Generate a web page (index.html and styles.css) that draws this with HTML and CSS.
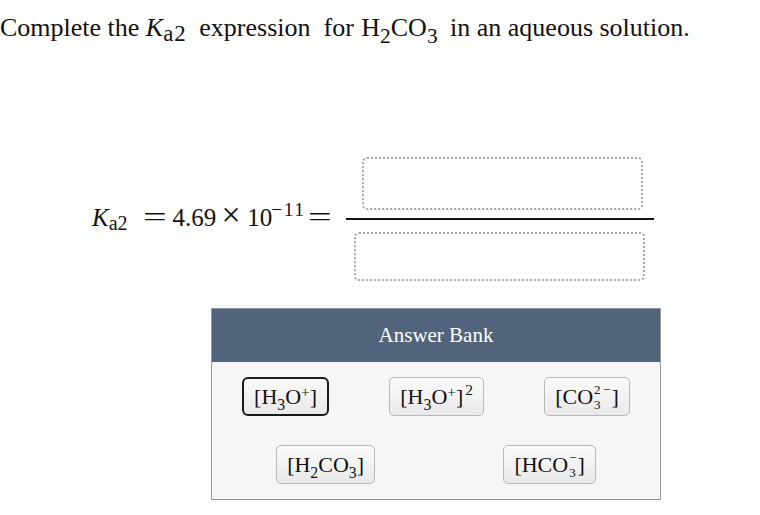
FILE: index.html
```html
<!DOCTYPE html>
<html lang="en">
<head>
<meta charset="utf-8">
<title>Ka2 expression</title>
<link rel="stylesheet" href="styles.css">
</head>
<body>
<p class="prompt">Complete the <span class="math math-k"><i class="k">K</i><sub class="ka">a2</sub></span> expression&nbsp; for <span class="math math-acid">H<sub>2</sub>CO<sub>3</sub></span> in an aqueous solution.</p>

<div class="equation">
  <div class="lhs">
    <i class="k">K</i><sub class="ka">a2</sub><span class="op op-first">=</span><span class="num">4.69</span><span class="times">×</span><span class="num">10</span><sup class="exp">−11</sup><span class="op op-last">=</span>
  </div>
  <div class="fraction">
    <div class="slot slot-num"></div>
    <div class="bar"></div>
    <div class="slot slot-den"></div>
  </div>
</div>

<section class="bank">
  <header class="bank-head">Answer Bank</header>
  <div class="bank-body">
    <div class="bank-row">
      <button class="chip chip-active">[H<sub>3</sub>O<sup>+</sup>]</button>
      <button class="chip">[H<sub>3</sub>O<sup>+</sup>]<sup class="pow">2</sup></button>
      <button class="chip">[CO<span class="stack"><span class="up">2&#8201;−</span><span class="down">3</span></span>]</button>
    </div>
    <div class="bank-row">
      <button class="chip">[H<sub>2</sub>CO<sub>3</sub>]</button>
      <button class="chip">[HCO<span class="stack"><span class="up">−</span><span class="down">3</span></span>]</button>
    </div>
  </div>
</section>
</body>
</html>
```
FILE: styles.css
```css
html, body {
  margin: 0;
  padding: 0;
  background: #fff;
}

body {
  width: 760px;
  height: 515px;
  overflow: hidden;
  font-family: "Liberation Serif", "Times New Roman", serif;
  color: #111;
}

sub, sup {
  line-height: 0;
}

.prompt {
  margin: 0;
  padding-top: 14px;
  font-size: 26px;
  line-height: 28px;
  white-space: nowrap;
}

.prompt sub {
  font-size: 0.82em;
  vertical-align: -0.32em;
}

.k {
  font-style: italic;
}

.prompt .ka {
  font-size: 0.88em;
  letter-spacing: 1px;
  vertical-align: -0.22em;
}

.math-k {
  margin-right: 6px;
}

.math-acid {
  margin: 0 6px 0 1px;
}

/* equation: left side, then a fraction of two drop slots */
.equation {
  display: flex;
  align-items: center;
  margin-top: 115px;
  padding-left: 92px;
}

.lhs {
  font-family: "Liberation Serif", "Times New Roman", serif;
  font-size: 25px;
  line-height: 28px;
  white-space: nowrap;
  margin-bottom: 3px;
}

.lhs .ka {
  font-size: 0.8em;
  vertical-align: -0.2em;
}

.lhs .op {
  display: inline-block;
  font-size: 28px;
  line-height: 0;
  transform: scaleX(1.5);
}

.lhs .op-first {
  margin: 0 10px 0 19px;
}

.lhs .op-last {
  margin: 0 19px 0 6px;
}

.lhs .times {
  display: inline-block;
  line-height: 0;
  transform: scale(1.35);
  vertical-align: 3px;
  margin: 0 9px 0 8px;
}

.lhs .exp {
  font-size: 0.78em;
  letter-spacing: 1.5px;
  vertical-align: 0.5em;
  margin-left: -1px;
}

.fraction {
  display: flex;
  flex-direction: column;
  width: 308px;
}

.slot {
  box-sizing: border-box;
  border: 2px dotted #a6a6a6;
  border-radius: 5px;
}

.slot-num {
  width: 281px;
  height: 53px;
  margin-left: 16px;
}

.bar {
  height: 2px;
  background: #111;
  margin: 8px 0 12px;
}

.slot-den {
  width: 291px;
  height: 49px;
  margin-left: 8px;
}

/* answer bank */
.bank {
  width: 450px;
  box-sizing: border-box;
  margin: 27px 0 0 211px;
  border: 1px solid #999;
}

.bank-head {
  height: 53px;
  background: #52647c;
  color: #fff;
  font-size: 21px;
  line-height: 53px;
  text-align: center;
}

.bank-body {
  background: #f6f6f6;
  padding: 15px 0 15px;
  display: flex;
  flex-direction: column;
  gap: 29px;
}

.bank-row {
  display: flex;
  justify-content: space-around;
}

.chip {
  box-sizing: border-box;
  height: 39px;
  padding: 0 10px;
  font-family: "Liberation Serif", "Times New Roman", serif;
  font-size: 22px;
  color: #111;
  background: linear-gradient(#fbfbfb, #e9e9e9);
  border: 1px solid #b9b9b9;
  border-radius: 5px;
  white-space: nowrap;
}

.chip-active {
  border: 2px solid #1a1a1a;
  border-radius: 6px;
}

.chip sub {
  font-size: 0.72em;
  vertical-align: -0.35em;
}

.chip sup {
  font-size: 0.7em;
  vertical-align: 0.45em;
}

.chip .pow {
  margin-left: 2px;
  vertical-align: 0.55em;
}

/* charge stacked over the subscript */
.stack {
  display: inline-flex;
  flex-direction: column;
  align-items: flex-start;
  font-size: 13px;
  line-height: 15px;
  vertical-align: 10px;
  margin: 0 1px;
}
```
